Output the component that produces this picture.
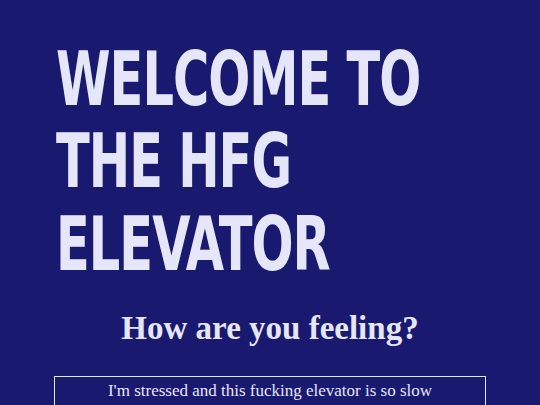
export default function App() {
  return (
    <div className="min-h-screen bg-[#191970] text-[#e6e6fa] overflow-hidden">
      <div className="pl-[56px] pt-[38px]">
        {/* condensed display heading, stretched tall */}
        <h1
          className="h-[246px] origin-top-left scale-y-[1.37] whitespace-nowrap text-[55px] font-bold uppercase leading-[60px] tracking-[-1px]"
          style={{ fontFamily: '"DejaVu Sans Condensed", "DejaVu Sans", sans-serif' }}
        >
          Welcome to
          <br />
          the HfG
          <br />
          Elevator
        </h1>
      </div>
      <h2 className="mt-[28px] text-center text-[33px] font-bold font-['Liberation_Serif',serif] leading-[32px]">
        How are you feeling?
      </h2>
      <div className="mx-[54px] mt-[32px] border border-[#e6e6fa] pt-[4px] pb-[6px] text-center text-[17px] font-['Liberation_Serif',serif] leading-[20px]">
        I'm stressed and this fucking elevator is so slow
      </div>
    </div>
  );
}
